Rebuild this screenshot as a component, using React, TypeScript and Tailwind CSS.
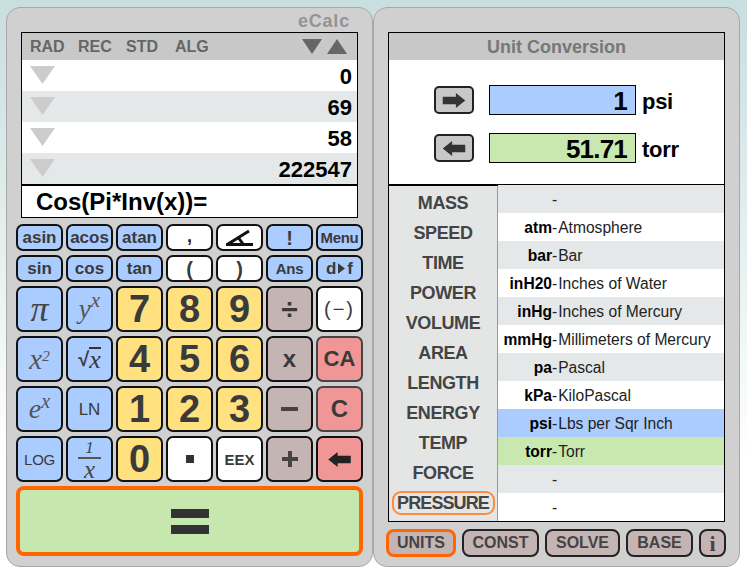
import type { ReactNode } from 'react'

const sans = "font-['Liberation_Sans',Arial,sans-serif]"
const serif = "font-['Liberation_Serif','Times_New_Roman',serif] italic font-normal"

const blue = 'bg-[#aaccff]'
const yellow = 'bg-[#ffe180]'
const white = 'bg-white'
const taupe = 'bg-[#c4b4b4]'
const red = 'bg-[#f09696]'

function Key({ color, className = '', children }: { color: string; className?: string; children: ReactNode }) {
  return (
    <button
      className={`flex items-center justify-center overflow-hidden rounded-[7px] border-2 border-[#111] font-bold leading-none text-[#3a3a3a] ${color} ${className}`}
    >
      {children}
    </button>
  )
}

function Triangle({ down, className }: { down?: boolean; className: string }) {
  return (
    <svg viewBox="0 0 20 16" preserveAspectRatio="none" className={className}>
      <polygon points={down ? '0,0 20,0 10,16' : '10,0 20,16 0,16'} fill="currentColor" />
    </svg>
  )
}

function ArrowIcon({ left, className }: { left?: boolean; className: string }) {
  return (
    <svg viewBox="0 0 24 16" className={className}>
      <polygon
        points={left ? '0,8 10,0 10,4 24,4 24,12 10,12 10,16' : '24,8 14,0 14,4 0,4 0,12 14,12 14,16'}
        fill="currentColor"
      />
    </svg>
  )
}

const stack = ['0', '69', '58', '222547']

const smallKeys: { label: ReactNode; color: string; className?: string }[] = [
  { label: 'asin', color: blue, className: 'text-[17px]' },
  { label: 'acos', color: blue, className: 'text-[17px]' },
  { label: 'atan', color: blue, className: 'text-[17px]' },
  { label: <span className="-mt-[3px] text-[18px] text-[#222]">,</span>, color: white },
  {
    label: (
      <svg viewBox="0 0 30 18" className="h-[18px] w-[30px]">
        <path d="M3 15 L24 2 M1 15.5 H28 M13 8 L18 15" stroke="#111" strokeWidth="3" fill="none" />
      </svg>
    ),
    color: white,
  },
  { label: '!', color: blue, className: 'text-[20px]' },
  { label: 'Menu', color: blue, className: 'text-[15px] tracking-[-0.3px]' },
  { label: 'sin', color: blue, className: 'text-[17px]' },
  { label: 'cos', color: blue, className: 'text-[17px]' },
  { label: 'tan', color: blue, className: 'text-[17px]' },
  { label: '(', color: white, className: 'text-[20px]' },
  { label: ')', color: white, className: 'text-[20px]' },
  { label: 'Ans', color: blue, className: 'text-[15px] tracking-[-0.3px]' },
  {
    label: (
      <span className="flex items-center gap-[2px]">
        d
        <svg viewBox="0 0 8 12" className="h-[11px] w-[7px]">
          <polygon points="0,0 8,6 0,12" fill="currentColor" />
        </svg>
        f
      </span>
    ),
    color: blue,
    className: 'text-[17px]',
  },
]

const digit = 'text-[38px]'
const bigKeys: { label: ReactNode; color: string; className?: string }[] = [
  { label: <span className={`${serif} text-[36px] text-[#444]`}>π</span>, color: blue },
  {
    label: (
      <span className={`${serif} text-[27px] text-[#555]`}>
        y<sup className="text-[21px] leading-none">x</sup>
      </span>
    ),
    color: blue,
  },
  { label: '7', color: yellow, className: digit },
  { label: '8', color: yellow, className: digit },
  { label: '9', color: yellow, className: digit },
  { label: '÷', color: taupe, className: 'text-[30px]' },
  { label: <span className="font-normal">(−)</span>, color: white, className: 'text-[20px] tracking-[2px]' },

  {
    label: (
      <span className={`${serif} text-[29px] text-[#555]`}>
        x<sup className="text-[15px] leading-none">2</sup>
      </span>
    ),
    color: blue,
  },
  {
    label: (
      <span className="flex items-center">
        <span className="text-[20px]">√</span>
        <span className={`${serif} border-t-2 border-[#333] text-[26px] leading-[22px]`}>x</span>
      </span>
    ),
    color: blue,
  },
  { label: '4', color: yellow, className: digit },
  { label: '5', color: yellow, className: digit },
  { label: '6', color: yellow, className: digit },
  { label: 'x', color: taupe, className: 'text-[24px]' },
  { label: 'CA', color: red, className: 'text-[22px] border-[#444]' },

  {
    label: (
      <span className={`${serif} text-[28px] text-[#555]`}>
        e<sup className="text-[20px] leading-none">x</sup>
      </span>
    ),
    color: blue,
  },
  { label: <span className="font-normal">LN</span>, color: blue, className: 'text-[17px]' },
  { label: '1', color: yellow, className: digit },
  { label: '2', color: yellow, className: digit },
  { label: '3', color: yellow, className: digit },
  {
    label: <span className="block h-[4px] w-[17px] bg-[#444]" />,
    color: taupe,
  },
  { label: 'C', color: red, className: 'text-[24px] border-[#444]' },

  { label: <span className="font-normal">LOG</span>, color: blue, className: 'text-[15px] tracking-[-0.3px]' },
  {
    label: (
      <span className={`${serif} flex flex-col items-center text-[#444]`}>
        <span className="text-[17px] leading-[15px]">1</span>
        <span className="my-[2px] block h-[2px] w-[23px] bg-[#555]" />
        <span className="text-[25px] leading-[17px]">x</span>
      </span>
    ),
    color: blue,
  },
  { label: '0', color: yellow, className: digit },
  { label: <span className="block h-[8px] w-[8px] bg-[#333]" />, color: white },
  { label: 'EEX', color: white, className: 'text-[15px]' },
  {
    label: (
      <svg viewBox="0 0 16 16" className="h-[16px] w-[16px]">
        <path d="M6 0h4v6h6v4h-6v6H6v-6H0V6h6z" fill="#444" />
      </svg>
    ),
    color: taupe,
  },
  { label: <ArrowIcon left className="h-[15px] w-[23px] text-[#222]" />, color: red },
]

const categories = ['MASS', 'SPEED', 'TIME', 'POWER', 'VOLUME', 'AREA', 'LENGTH', 'ENERGY', 'TEMP', 'FORCE', 'PRESSURE']

const units: { code: string; name: string; bg: string }[] = [
  { code: '', name: '', bg: 'bg-[#e4e8e8]' },
  { code: 'atm', name: 'Atmosphere', bg: 'bg-white' },
  { code: 'bar', name: 'Bar', bg: 'bg-[#e4e8e8]' },
  { code: 'inH20', name: 'Inches of Water', bg: 'bg-white' },
  { code: 'inHg', name: 'Inches of Mercury', bg: 'bg-[#e4e8e8]' },
  { code: 'mmHg', name: 'Millimeters of Mercury', bg: 'bg-white' },
  { code: 'pa', name: 'Pascal', bg: 'bg-[#e4e8e8]' },
  { code: 'kPa', name: 'KiloPascal', bg: 'bg-white' },
  { code: 'psi', name: 'Lbs per Sqr Inch', bg: 'bg-[#aaccff]' },
  { code: 'torr', name: 'Torr', bg: 'bg-[#c8e8b0]' },
  { code: '', name: '', bg: 'bg-[#e4e8e8]' },
  { code: '', name: '', bg: 'bg-white' },
]

const tabs: { label: ReactNode; width: string; active?: boolean }[] = [
  { label: 'UNITS', width: 'w-[70px]', active: true },
  { label: 'CONST', width: 'w-[77px]' },
  { label: 'SOLVE', width: 'w-[75px]' },
  { label: 'BASE', width: 'w-[67px]' },
  { label: <span className="font-['Liberation_Serif',serif] text-[22px]">i</span>, width: 'w-[27px]' },
]

function Calculator() {
  return (
    <div className="flex h-[560px] w-[367px] flex-col rounded-[14px] border border-[#a8a8a8] bg-[#d0d0d0] pl-[9px]">
      <div className="flex h-[24px] items-end justify-end pr-[22px] text-[18px] leading-[22px] font-bold tracking-[0.8px] text-[#949494]">
        eCalc
      </div>
      <div className="ml-[5px] w-[337px] border border-black">
        <div className="flex h-[27px] items-center bg-[#c8c8c8] pl-[8px] text-[16px] font-bold text-[#666]">
          <span className="w-[48px] pt-[1px]">RAD</span>
          <span className="w-[48px] pt-[1px]">REC</span>
          <span className="w-[49px] pt-[1px]">STD</span>
          <span className="pt-[1px]">ALG</span>
          <Triangle down className="ml-auto h-[15px] w-[20px] text-[#666]" />
          <Triangle className="mr-[10px] ml-[5px] h-[15px] w-[20px] text-[#666]" />
        </div>
        {stack.map((value, i) => (
          <div
            key={i}
            className={`flex h-[31px] items-center justify-between pr-[5px] pl-[8px] text-[22px] font-bold text-black ${
              i % 2 ? 'bg-[#e4e8e8]' : 'bg-white'
            }`}
          >
            <Triangle down className="-mt-[1px] h-[18px] w-[25px] text-[#ccc]" />
            <span className="pt-[1px]">{value}</span>
          </div>
        ))}
        <div className="flex h-[33px] items-center border-t-2 border-black bg-white pl-[14px] text-[24px] font-bold text-black">
          Cos(Pi*Inv(x))=
        </div>
      </div>
      <div className="mt-[6px] grid grid-cols-[repeat(7,47px)] grid-rows-[27px_27px] gap-x-[3px] gap-y-[4px]">
        {smallKeys.map((key, i) => (
          <Key key={i} color={key.color} className={key.className}>
            {key.label}
          </Key>
        ))}
      </div>
      <div className="mt-[4px] grid grid-cols-[repeat(7,47px)] grid-rows-[repeat(4,46px)] gap-x-[3px] gap-y-[4px]">
        {bigKeys.map((key, i) => (
          <Key key={i} color={key.color} className={key.className}>
            {key.label}
          </Key>
        ))}
      </div>
      <button className="mt-[4px] flex h-[70px] w-[347px] flex-col items-center justify-center gap-[7px] rounded-[8px] border-[4px] border-[#ff6600] bg-[#c6e8ae]">
        <span className="block h-[9px] w-[38px] bg-[#333]" />
        <span className="block h-[9px] w-[38px] bg-[#333]" />
      </button>
    </div>
  )
}

function UnitConverter() {
  return (
    <div className="flex h-[560px] w-[367px] flex-col rounded-[14px] border border-[#a8a8a8] bg-[#d0d0d0] pt-[24px] pl-[14px]">
      <div className="w-[337px] border border-black">
        <div className="flex h-[27px] items-center justify-center bg-[#c8c8c8] pt-[1px] text-[18px] font-bold text-[#777]">
          Unit Conversion
        </div>
        <div className="flex h-[124px] flex-col gap-[18px] bg-white pt-[25px] pl-[45px]">
          <div className="flex h-[30px] items-center">
            <button className="mr-[15px] flex h-[28px] w-[40px] items-center justify-center rounded-[5px] border-2 border-[#222] bg-[#c8c8c8]">
              <ArrowIcon className="h-[15px] w-[24px] text-[#333]" />
            </button>
            <div className="h-[30px] w-[147px] border border-black bg-[#aaccff] pr-[8px] text-right text-[26px] leading-[30px] font-bold tracking-[-0.8px] text-black">
              1
            </div>
            <span className="ml-[6px] pt-[3px] text-[22px] font-bold tracking-[-0.3px] text-black">psi</span>
          </div>
          <div className="flex h-[30px] items-center">
            <button className="mr-[15px] flex h-[28px] w-[40px] items-center justify-center rounded-[5px] border-2 border-[#222] bg-[#c8c8c8]">
              <ArrowIcon left className="h-[15px] w-[24px] text-[#333]" />
            </button>
            <div className="h-[30px] w-[147px] border border-black bg-[#c8e8b0] pr-[8px] text-right text-[26px] leading-[30px] font-bold tracking-[-0.8px] text-black">
              51.71
            </div>
            <span className="ml-[6px] pt-[3px] text-[22px] font-bold tracking-[-0.3px] text-black">torr</span>
          </div>
        </div>
        <div className="flex h-[337px] border-t-2 border-black">
          <div className="flex w-[109px] flex-col border-r border-[#999] bg-[#e4e6e6] pt-[2px]">
            {categories.map((name) => (
              <div
                key={name}
                className="flex h-[30px] items-center justify-center text-[18px] font-bold tracking-[-0.4px] text-[#444]"
              >
                {name === 'PRESSURE' ? (
                  <span className="flex h-[24px] w-[103px] items-center justify-center rounded-[9px] border-2 border-[#ff8a40] tracking-[-0.9px]">
                    {name}
                  </span>
                ) : (
                  name
                )}
              </div>
            ))}
          </div>
          <div className="flex-1 -mt-[1px]">
            {units.map((unit, i) => (
              <div key={i} className={`flex h-[28px] items-center pt-[1px] text-[15.6px] text-[#222] ${unit.bg}`}>
                <span className="w-[54px] text-right font-bold text-black">{unit.code}</span>
                <span>-</span>
                <span className="ml-[1px] whitespace-nowrap">{unit.name}</span>
              </div>
            ))}
          </div>
        </div>
      </div>
      <div className="mt-[7px] -ml-[2px] flex gap-[6px]">
        {tabs.map((tab, i) => (
          <button
            key={i}
            className={`flex h-[28px] items-center justify-center rounded-[8px] bg-[#c4b4b4] text-[16px] font-bold text-[#444] ${tab.width} ${
              tab.active ? 'border-[3px] border-[#ff6600]' : 'border-2 border-[#222]'
            }`}
          >
            {tab.label}
          </button>
        ))}
      </div>
    </div>
  )
}

export default function App() {
  return (
    <div
      className={`${sans} flex h-[575px] w-[747px] gap-0 overflow-hidden bg-gradient-to-b from-[#c9dede] to-white to-80% pt-[7px] pl-[6px]`}
    >
      <Calculator />
      <UnitConverter />
    </div>
  )
}
